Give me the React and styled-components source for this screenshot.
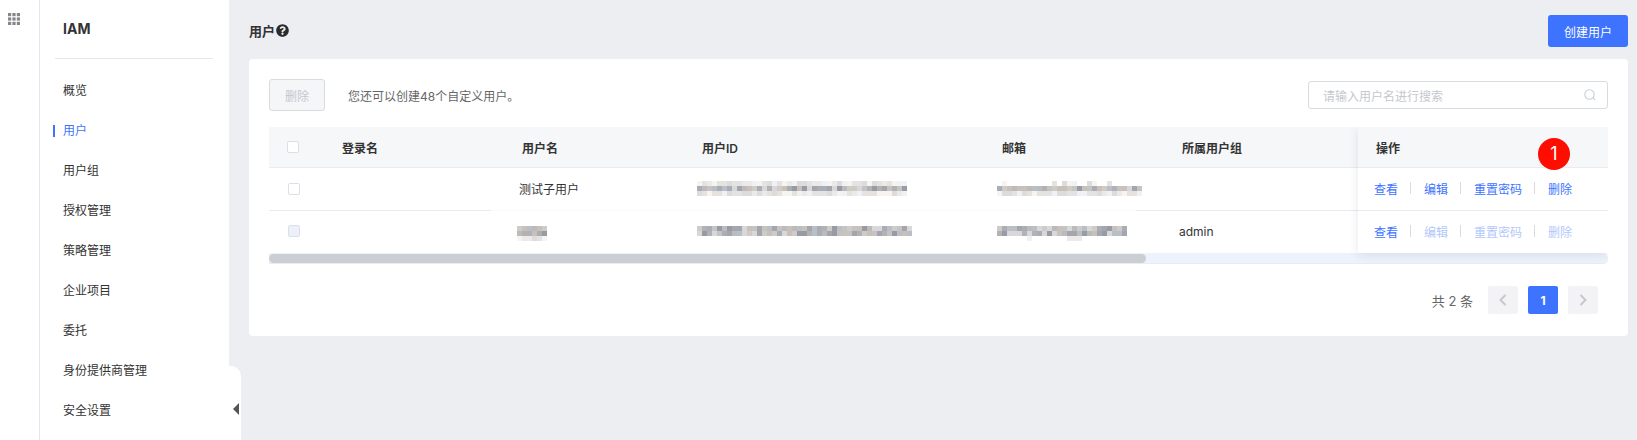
import React from "react";
import styled, { createGlobalStyle } from "styled-components";
import { FaQuestionCircle } from "react-icons/fa";

const Global = createGlobalStyle`
  html, body { margin: 0; padding: 0; height: 440px; overflow: hidden; background: #eceef2; }
  * { box-sizing: border-box; }
  body { font-family: Inter, "Noto Sans CJK SC", sans-serif; font-size: 12px; color: #333; }
`;

const Page = styled.div`display: flex; height: 440px; width: 1637px; overflow: hidden;`;
const Rail = styled.div`width: 40px; flex: none; background: #fff; border-right: 1px solid #e6e6f0; padding: 13px 0 0 8px;`;
const Sidebar = styled.aside`position: relative; width: 189px; flex: none; background: #fff; padding: 0 16px 0 15px;`;
const Brand = styled.div`height: 59px; border-bottom: 1px solid #e6e6f0; padding: 20px 0 0 8px; font-size: 14px; font-weight: 700; line-height: 17px; color: #333;`;
const Nav = styled.nav`display: flex; flex-direction: column; padding-top: 12px;`;
const NavItem = styled.div`
  position: relative; height: 40px; line-height: 40px; padding-left: 8px;
  color: ${p => (p.$active ? "#3d73ff" : "#333")};
  &::before {
    content: ""; display: ${p => (p.$active ? "block" : "none")};
    position: absolute; left: -2px; top: 14px; width: 2px; height: 12px; background: #3d73ff;
  }
`;
const Collapse = styled.div`
  position: absolute; left: 189px; top: 366px; width: 12px; height: 86px;
  background: #fff; border-radius: 0 10px 10px 0; display: flex; align-items: center; padding-left: 4px;
  &::after {
    content: ""; width: 0; height: 0; border-style: solid; border-width: 6px 6px 6px 0;
    border-color: transparent #555 transparent transparent;
  }
`;
const Main = styled.main`flex: 1; min-width: 0; padding: 15px 9px 0 20px;`;
const Header = styled.div`display: flex; justify-content: space-between; align-items: center; height: 32px; margin-bottom: 12px;`;
const Title = styled.div`display: flex; align-items: center; gap: 1px; padding-bottom: 2px; font-size: 13px; font-weight: 700; color: #333;`;
const Help = styled(FaQuestionCircle)`width: 13px; height: 13px; color: #2b2b2b;`;
const Primary = styled.button`
  width: 80px; height: 32px; border: 0; border-radius: 3px; background: #3d73ff; color: #fff;
  font: inherit; padding: 0;
`;
const Card = styled.section`background: #fff; border-radius: 4px; padding: 20px 20px 22px; height: 277px;`;
const Toolbar = styled.div`display: flex; align-items: center; height: 32px; margin-bottom: 16px;`;
const Disabled = styled.button`
  width: 56px; height: 32px; border: 1px solid #d9dbe0; border-radius: 3px; background: #f5f6f8;
  color: #c4c7cf; font: inherit; padding: 0; margin-right: 23px;
`;
const Hint = styled.span`color: #666; flex: 1;`;
const Search = styled.div`
  width: 300px; height: 28px; border: 1px solid #d9dbe0; border-radius: 3px; display: flex; align-items: center;
  justify-content: space-between; padding: 0 11px 0 14px; color: #c5c8ce;
`;
const Table = styled.div`position: relative; display: flex; align-items: flex-start;`;
const Scroll = styled.div`width: 1089px; flex: none;`;
const Fixed = styled.div`
  width: 250px; flex: none; background: #fff; position: relative; z-index: 1;
  box-shadow: 0 2px 10px rgba(30, 40, 70, .1); clip-path: inset(0 0 -14px -14px);
`;
const Row = styled.div`
  display: grid; grid-template-columns: 73px 180px 180px 300px 180px 176px; align-items: center;
  height: ${p => p.$h}px;
  background: ${p => p.$head ? "#f6f7f9" : "#fff"};
  ${p => p.$head && "border-bottom: 1px solid #e9eaf2; font-weight: 600; color: #333;"}
  ${p => p.$line && "background: linear-gradient(to right, #e9eaf2 222px, #fafafc 222px, #fafafc 867px, #e9eaf2 867px) bottom / 100% 1px no-repeat #fff;"}
`;
const HeadCell = styled.div`display: flex; align-items: center; color: #333;`;
const Cell = styled.div`
  display: flex; align-items: center; color: #333;
  margin-left: ${p => p.$shift || 0}px;
  padding: ${p => (p.$drop ? "3px 0 0" : "0 0 2px")};
`;
const Check = styled.span`
  display: block; width: 12px; height: 12px; border: 1px solid #dcdfe6; border-radius: 2px;
  margin-left: ${p => (p.$head ? 18 : 19)}px; background: ${p => (p.$off ? "#edf0fb" : "#fff")};
`;
const ActionRow = styled.div`
  display: flex; align-items: center; height: ${p => p.$h}px; padding: 0 0 2px 16px;
  background: ${p => p.$head ? "#f6f7f9" : "#fff"};
  ${p => p.$head && "border-bottom: 1px solid #e9eaf2; font-weight: 600; padding: 0 0 0 18px;"}
  ${p => p.$line && "border-bottom: 1px solid #e9eaf2;"}
`;
const Act = styled.a`color: ${p => (p.$off ? "#b2c8fb" : "#3d73ff")};`;
const Sep = styled.i`display: block; width: 1px; height: 12px; background: #d9dbe0; margin: 0 13px 0 12px;`;
const Badge = styled.div`
  position: absolute; z-index: 2; top: 11px; right: 38px; width: 32px; height: 32px; border-radius: 50%;
  background: #ff0d00; color: #fff; font-size: 18px; line-height: 32px; text-align: center;
`;
const Track = styled.div`height: 11px; background: #eef2fc; border-bottom: 1px solid #e9eaf2; border-radius: 0 5px 5px 0; padding-top: 1px;`;
const Thumb = styled.div`width: 877px; height: 9px; background: #cbced3; border-radius: 5px;`;
const Pager = styled.div`display: flex; justify-content: flex-end; align-items: center; margin-top: 22px; padding-right: 10px;`;
const Total = styled.span`color: #666; font-size: 13px; margin-right: 15px;`;
const PageBtn = styled.div`
  width: 30px; height: 28px; border-radius: 2px; margin-left: ${p => p.$ml || 0}px;
  display: flex; align-items: center; justify-content: center; font-weight: 700;
  background: ${p => (p.$on ? "#3d73ff" : "#f3f3f5")}; color: ${p => (p.$on ? "#fff" : "#c5c8ce")};
`;

const Grid = () => (
  <svg width="12" height="12" viewBox="0 0 12 12" fill="#85868c" style={{ display: "block" }}>
    {[0, 4.4, 8.8].flatMap(y => [0, 4.4, 8.8].map(x => <rect key={x + "-" + y} x={x} y={y} width="3.2" height="3.2" />))}
  </svg>
);
const Mag = () => (
  <svg width="12" height="12" viewBox="0 0 12 12" fill="none" stroke="#c8d0dc" strokeWidth="1.1">
    <circle cx="5.5" cy="5.5" r="4.7" /><path d="M9 9 L11.2 11.2" />
  </svg>
);
const Chev = ({ dir }) => (
  <svg width="8" height="12" viewBox="0 0 8 12" fill="none" stroke="#c5c8ce" strokeWidth="2">
    <path d={dir === "l" ? "M6.5 1 L1.5 6 L6.5 11" : "M1.5 1 L6.5 6 L1.5 11"} />
  </svg>
);

const LIGHT = ["#f7f3ee", "#eceae8", "#e4e3e2", "#dcdcde", "#eef1f5", "#e6e2de"];
const MID = ["#cfcbc7", "#c6c4c3", "#bcbabc", "#b2b1b4", "#a5a6ad", "#989aa4", "#c9c1b9", "#b9bfc7", "#d8d8da", "#a9adb6"];

/* rowsSpec: one entry per 5px row: "mid", "light", or an array of columns that hold a pale cell */
function Mosaic({ cols, rowsSpec, seed }) {
  let s = seed;
  const rnd = () => ((s = (s * 16807) % 2147483647) / 2147483647);
  const cells = [];
  rowsSpec.forEach((spec, r) => {
    for (let c = 0; c < cols; c++) {
      const v = rnd();
      let fill = null;
      if (spec === "mid") fill = MID[Math.floor(v * MID.length)];
      else if (spec === "light") fill = LIGHT[Math.floor(v * LIGHT.length)];
      else if (spec.includes(c)) fill = LIGHT[Math.floor(v * LIGHT.length)];
      if (fill) cells.push(<rect key={r + "_" + c} x={c * 5} y={r * 5} width="5" height="5" fill={fill} />);
    }
  });
  return <svg width={cols * 5} height={rowsSpec.length * 5} shapeRendering="crispEdges" style={{ display: "block" }}>{cells}</svg>;
}

const navs = ["概览", "用户", "用户组", "授权管理", "策略管理", "企业项目", "委托", "身份提供商管理", "安全设置"];

const Actions = ({ off }) => (
  <>
    <Act>查看</Act><Sep /><Act $off={off}>编辑</Act><Sep /><Act $off={off}>重置密码</Act><Sep /><Act $off={off}>删除</Act>
  </>
);

export default function App() {
  return (
    <Page>
      <Global />
      <Rail><Grid /></Rail>
      <Sidebar>
        <Brand>IAM</Brand>
        <Nav>{navs.map((n, i) => <NavItem key={n} $active={i === 1}>{n}</NavItem>)}</Nav>
        <Collapse />
      </Sidebar>
      <Main>
        <Header>
          <Title>用户<Help /></Title>
          <Primary>创建用户</Primary>
        </Header>
        <Card>
          <Toolbar>
            <Disabled>删除</Disabled>
            <Hint>您还可以创建48个自定义用户。</Hint>
            <Search>请输入用户名进行搜索<Mag /></Search>
          </Toolbar>
          <Table>
            <Scroll>
              <Row $head $h={41}>
                <HeadCell><Check $head /></HeadCell><HeadCell>登录名</HeadCell><HeadCell>用户名</HeadCell><HeadCell>用户ID</HeadCell><HeadCell>邮箱</HeadCell><HeadCell>所属用户组</HeadCell>
              </Row>
              <Row $line $h={43}>
                <Cell><Check /></Cell><Cell />
                <Cell $shift={-3}>测试子用户</Cell>
                <Cell $shift={-5}><Mosaic cols={42} rowsSpec={["light", "mid", "light"]} seed={11} /></Cell>
                <Cell $shift={-5}><Mosaic cols={29} rowsSpec={[[1, 11, 13, 14, 15, 18, 19, 22], "mid", "light"]} seed={77} /></Cell>
                <Cell />
              </Row>
              <Row $h={42}>
                <Cell><Check $off /></Cell><Cell />
                <Cell $shift={-5} $drop><Mosaic cols={6} rowsSpec={["mid", "mid", "light"]} seed={5} /></Cell>
                <Cell $shift={-5}><Mosaic cols={43} rowsSpec={["mid", "mid"]} seed={33} /></Cell>
                <Cell $shift={-5} $drop><Mosaic cols={26} rowsSpec={["mid", "mid", [6, 14, 15, 16]]} seed={91} /></Cell>
                <Cell $shift={-3}>admin</Cell>
              </Row>
            </Scroll>
            <Fixed>
              <ActionRow $head $h={41}>操作</ActionRow>
              <ActionRow $line $h={43}><Actions /></ActionRow>
              <ActionRow $h={42}><Actions off /></ActionRow>
            </Fixed>
            <Badge>1</Badge>
          </Table>
          <Track><Thumb /></Track>
          <Pager>
            <Total>共 2 条</Total>
            <PageBtn><Chev dir="l" /></PageBtn>
            <PageBtn $on $ml={10}>1</PageBtn>
            <PageBtn $ml={10}><Chev dir="r" /></PageBtn>
          </Pager>
        </Card>
      </Main>
    </Page>
  );
}
